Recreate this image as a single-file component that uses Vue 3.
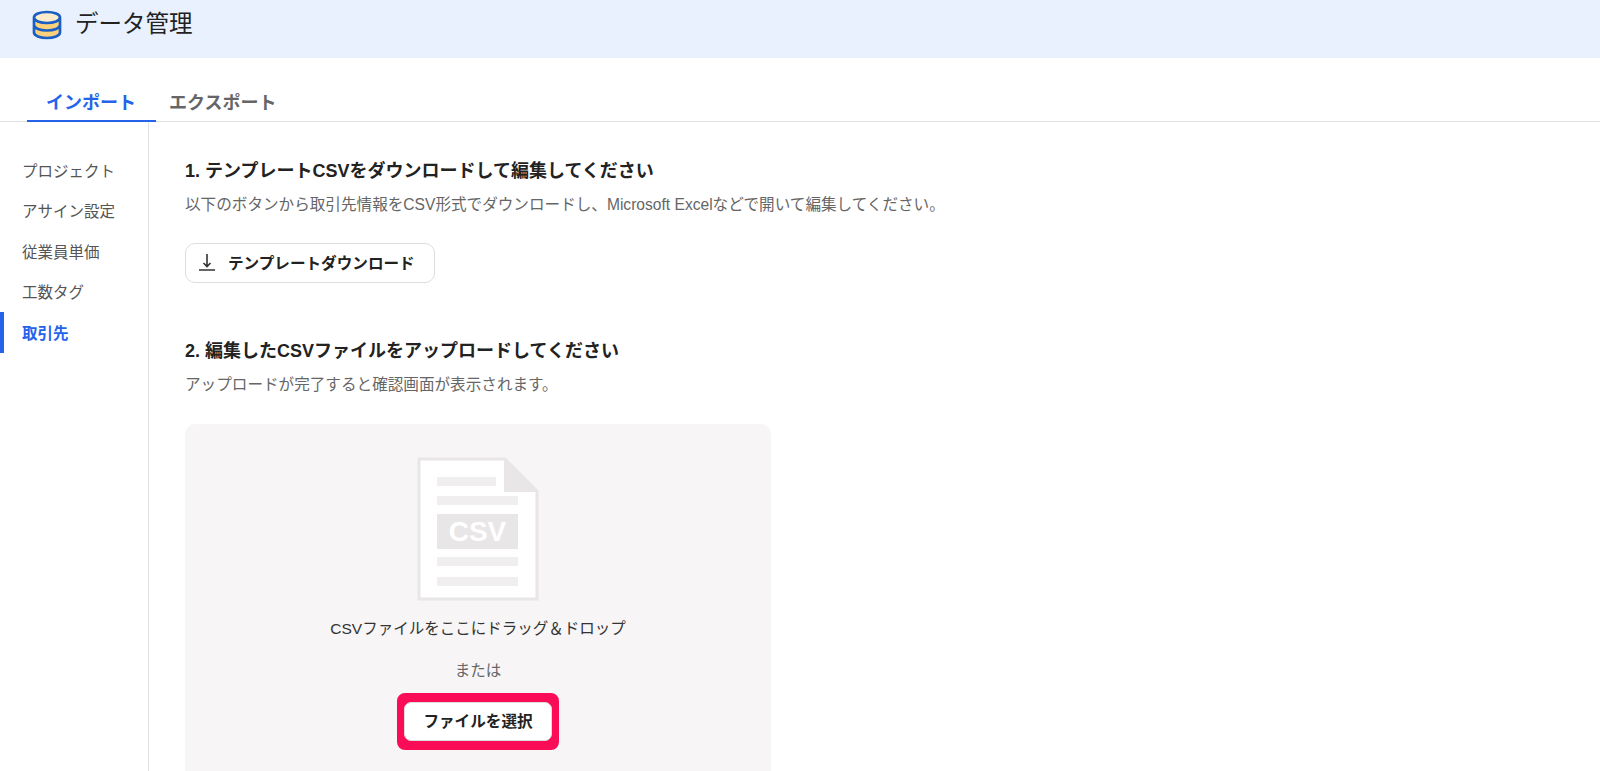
<template>
  <div class="data-page">
    <header class="page-header">
      <svg class="db-icon" viewBox="0 0 30 30" width="30" height="30">
        <path d="M2 7.500v15C2 25.600 8 28 15 28s13-2.400 13-5.500v-15z" fill="#fdd17c" />
        <ellipse cx="15" cy="7.500" rx="13" ry="5.500" fill="#fdeccb" />
        <path d="M2 7.500C2 4.400 8 2 15 2s13 2.400 13 5.500v15c0 3.100-6 5.500-13 5.500S2 25.600 2 22.500z M2 7.500c0 3.100 6 5.500 13 5.500s13-2.400 13-5.500 M2 15c0 3.100 6 5.500 13 5.500S28 18.100 28 15" fill="none" stroke="#1b5fc4" stroke-width="2.700" />
      </svg>
      <h1>データ管理</h1>
    </header>

    <nav class="tabs">
      <a v-for="tab in tabs" :key="tab" class="tab" :class="{ active: tab === activeTab }">{{ tab }}</a>
    </nav>

    <div class="body-row">
      <aside class="side-menu">
        <a v-for="item in menu" :key="item" class="side-item" :class="{ active: item === activeItem }">{{ item }}</a>
      </aside>

      <main class="content">
        <h2>1. テンプレートCSVをダウンロードして編集してください</h2>
        <p class="desc">以下のボタンから取引先情報をCSV形式でダウンロードし、Microsoft Excelなどで開いて編集してください。</p>
        <button class="btn download-btn">
          <svg viewBox="0 0 18 18" width="18" height="18">
            <path d="M9 1v12.500M5.500 10 9 13.500l3.500-3.500M1 17h16" fill="none" stroke="#333" stroke-width="1.600" />
          </svg>
          <span class="btn-label">テンプレートダウンロード</span>
        </button>

        <h2 class="second">2. 編集したCSVファイルをアップロードしてください</h2>
        <p class="desc">アップロードが完了すると確認画面が表示されます。</p>

        <div class="drop-zone">
          <svg class="csv-doc" viewBox="0 0 122 144" width="122" height="144">
            <path d="M2 2h86l32 32v108H2z" fill="#fff" stroke="#e8e6e7" stroke-width="3" />
            <path d="M87 2l33 33H87z" fill="#e8e6e7" />
            <g fill="#f0eeee">
              <rect x="20" y="20" width="59" height="9" />
              <rect x="20" y="39" width="81" height="9" />
              <rect x="20" y="100" width="81" height="9" />
              <rect x="20" y="120" width="81" height="9" />
            </g>
            <rect x="20" y="57" width="81" height="35" fill="#e8e6e7" />
            <text x="60.500" y="84" text-anchor="middle" class="csv-label">CSV</text>
          </svg>
          <p class="drop-text">CSVファイルをここにドラッグ＆ドロップ</p>
          <p class="or-text">または</p>
          <div class="select-highlight">
            <button class="btn select-btn">ファイルを選択</button>
          </div>
        </div>
      </main>
    </div>
  </div>
</template>

<script setup>
const tabs = ['インポート', 'エクスポート']
const activeTab = 'インポート'
const menu = ['プロジェクト', 'アサイン設定', '従業員単価', '工数タグ', '取引先']
const activeItem = '取引先'
</script>

<style>
html,
body {
  margin: 0;
  height: 771px;
  overflow: hidden;
  background: #fff;
}
</style>

<style scoped>
.data-page {
  height: 771px;
  overflow: hidden;
  display: flex;
  flex-direction: column;
  font-family: "Liberation Sans", "Noto Sans CJK JP", sans-serif;
  color: #333;
}

.page-header {
  height: 58px;
  flex: none;
  background: #e8f1fd;
  display: flex;
  align-items: flex-start;
  padding: 10px 0 0 32px;
  box-sizing: border-box;
  gap: 13px;
}

.db-icon {
  flex: none;
}

.page-header h1 {
  margin: 0;
  font-size: 23.500px;
  line-height: 28px;
  font-weight: 400;
  color: #222;
}

.tabs {
  height: 64px;
  flex: none;
  box-sizing: border-box;
  display: flex;
  align-items: flex-end;
  padding-left: 27px;
  border-bottom: 1px solid #e2e2e2;
}

.tab {
  height: 46px;
  line-height: 24px;
  box-sizing: border-box;
  padding: 15px 20px 0 19px;
  font-size: 18px;
  font-weight: 700;
  color: #666;
  margin-bottom: -1px;
}

.tab + .tab {
  padding-left: 13px;
}

.tab.active {
  color: #2563eb;
  border-bottom: 2px solid #2563eb;
}

.body-row {
  flex: 1;
  display: flex;
  min-height: 0;
}

.side-menu {
  width: 149px;
  flex: none;
  box-sizing: border-box;
  border-right: 1px solid #e2e2e2;
  padding-top: 27.600px;
}

.side-item {
  display: block;
  height: 40.600px;
  line-height: 43.400px;
  padding-left: 22px;
  font-size: 15.500px;
  color: #555;
}

.side-item.active {
  color: #2563eb;
  font-weight: 700;
  padding-left: 18px;
  border-left: 4px solid #2563eb;
}

.content {
  flex: 1;
  padding: 37px 0 0 36px;
  min-width: 0;
}

h2 {
  margin: 0;
  font-size: 18px;
  line-height: 24px;
  font-weight: 700;
  color: #222;
}

h2.second {
  margin-top: 56px;
}

.desc {
  margin: 10px 0 0;
  font-size: 15.600px;
  line-height: 24px;
  color: #666;
}

.btn {
  font-family: inherit;
  font-weight: 700;
  font-size: 15.600px;
  color: #222;
  background: #fff;
  border: 1px solid #dddddd;
  border-radius: 10px;
  box-sizing: border-box;
  display: flex;
  align-items: center;
}

.download-btn {
  margin-top: 26px;
  width: 250px;
  height: 40px;
  padding: 0 0 2px 12px;
  gap: 12px;
}

.drop-zone {
  margin-top: 27px;
  width: 586px;
  height: 400px;
  background: #f7f5f6;
  border-radius: 10px;
  display: flex;
  flex-direction: column;
  align-items: center;
  padding-top: 33px;
  box-sizing: border-box;
}

.csv-doc {
  flex: none;
}

.csv-label {
  font-family: "Liberation Sans", sans-serif;
  font-size: 28px;
  font-weight: 700;
  fill: #fff;
}

.drop-text {
  margin: 16px 0 0;
  font-size: 15.500px;
  line-height: 24px;
  color: #333;
}

.or-text {
  margin: 18px 0 0;
  font-size: 15.500px;
  line-height: 24px;
  color: #666;
}

.select-highlight {
  margin-top: 10px;
  border: solid #fb0c57;
  border-width: 9px 7px;
  border-radius: 8px;
  background: #fb0c57;
}

.select-btn {
  width: 148px;
  height: 39px;
  justify-content: center;
  padding: 0 0 3px;
  border-radius: 7px;
}
</style>
